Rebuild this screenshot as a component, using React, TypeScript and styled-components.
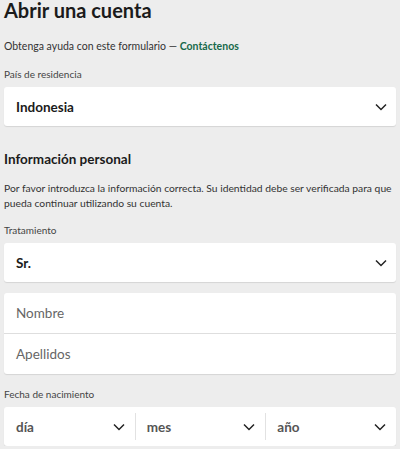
import React from "react";
import styled, { createGlobalStyle } from "styled-components";

const GlobalStyle = createGlobalStyle`
  html, body {
    margin: 0;
    padding: 0;
    background: #ededed;
  }
  body {
    font-family: Lato, "Open Sans", sans-serif;
    color: #1b1b1b;
  }
`;

const Page = styled.div`
  padding: 0 4px;
  display: flex;
  flex-direction: column;
`;

const Title = styled.h1`
  margin: 0;
  font-size: 20px;
  line-height: 20px;
  font-weight: 700;
  color: #1b1b1b;
`;

const Help = styled.p`
  margin: 19px 0 0;
  font-size: 10.5px;
  line-height: 14px;
  color: #333;
`;

const HelpLink = styled.a`
  color: #17694a;
  font-weight: 700;
  text-decoration: none;
`;

const Label = styled.div<{ $top: number }>`
  margin-top: ${({ $top }) => $top}px;
  font-size: 10px;
  line-height: 13px;
  color: #444;
`;

const Card = styled.div<{ $top?: number }>`
  margin-top: ${({ $top }) => $top ?? 6}px;
  background: #fff;
  border-radius: 3px;
  box-shadow: 0 1px 1px rgba(0, 0, 0, 0.1);
  display: flex;
  flex-direction: column;
`;

const SelectRow = styled.div`
  height: 39px;
  display: flex;
  align-items: center;
  justify-content: space-between;
  padding: 0 9px 0 12px;
  box-sizing: border-box;
`;

const Value = styled.span<{ $muted?: boolean }>`
  font-size: 13.5px;
  font-weight: 700;
  color: ${({ $muted }) => ($muted ? "#555" : "#1b1b1b")};
`;

const InputRow = styled.div`
  height: 40px;
  display: flex;
  align-items: center;
  padding: 0 12px;
  font-size: 13.5px;
  color: #666;
  & + & {
    border-top: 1px solid #dedede;
  }
`;

const Section = styled.h2`
  margin: 24px 0 0;
  font-size: 13.5px;
  line-height: 18px;
  font-weight: 700;
`;

const Para = styled.p`
  margin: 13px 0 0;
  font-size: 10.3px;
  line-height: 15px;
  color: #333;
`;

const DateCard = styled(Card)`
  flex-direction: row;
`;

const Divided = styled.div`
  flex: 1;
  position: relative;
  & > div {
    padding-right: 10px;
  }
  & + &::before {
    content: "";
    position: absolute;
    left: 0;
    top: 6px;
    bottom: 6px;
    border-left: 1px solid #e2e2e2;
  }
`;

const Chevron = () => (
  <svg width="12" height="8" viewBox="0 0 12 8" fill="none">
    <path d="M1 1.5 L6 6.5 L11 1.5" stroke="#222" strokeWidth="1.5" />
  </svg>
);

const Select = ({ value }: { value: string }) => (
  <SelectRow>
    <Value>{value}</Value>
    <Chevron />
  </SelectRow>
);

const DatePart = ({ value }: { value: string }) => (
  <Divided>
    <SelectRow>
      <Value $muted>{value}</Value>
      <Chevron />
    </SelectRow>
  </Divided>
);

export default function App() {
  return (
    <Page>
      <GlobalStyle />
      <Title>Abrir una cuenta</Title>
      <Help>
        Obtenga ayuda con este formulario — <HelpLink>Contáctenos</HelpLink>
      </Help>

      <Label $top={15}>País de residencia</Label>
      <Card>
        <Select value="Indonesia" />
      </Card>

      <Section>Información personal</Section>
      <Para>
        Por favor introduzca la información correcta. Su identidad debe ser verificada para que
        pueda continuar utilizando su cuenta.
      </Para>

      <Label $top={13}>Tratamiento</Label>
      <Card>
        <Select value="Sr." />
      </Card>

      <Card $top={11}>
        <InputRow>Nombre</InputRow>
        <InputRow>Apellidos</InputRow>
      </Card>

      <Label $top={14}>Fecha de nacimiento</Label>
      <DateCard>
        <DatePart value="día" />
        <DatePart value="mes" />
        <DatePart value="año" />
      </DateCard>
    </Page>
  );
}
